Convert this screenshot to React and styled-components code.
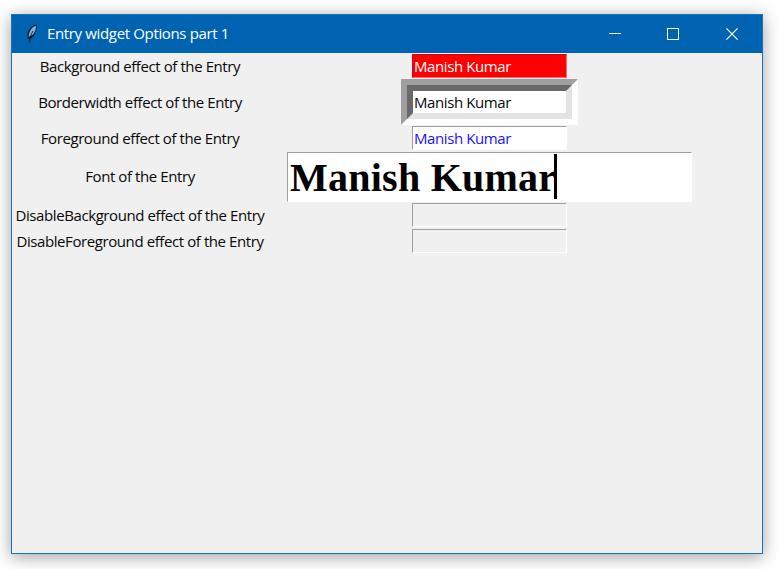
import React from "react";
import styled, { createGlobalStyle } from "styled-components";

const GlobalStyle = createGlobalStyle`
  * { box-sizing: border-box; }
  html, body { margin: 0; background: #fff; overflow: hidden; }
`;

const Desktop = styled.div`
  width: 779px;
  height: 569px;
  padding: 14px 16px 15px 11px;
  overflow: hidden;
  background: #fff;
`;

const Window = styled.main`
  width: 752px;
  height: 540px;
  border: 1px solid #1873b8;
  background: #f0f0f0;
  box-shadow: 0 3px 16px rgba(0, 0, 0, 0.38);
  font-family: "Open Sans", "Noto Sans", sans-serif;
`;

const TitleBar = styled.header`
  display: flex;
  align-items: center;
  height: 38px;
  padding-left: 12px;
  background: #0063b1;
  color: #fff;
`;

const Title = styled.h1`
  flex: 1;
  margin: 0 0 0 7px;
  font-size: 15px;
  font-weight: 400;
  line-height: 36px;
  height: 38px;
  letter-spacing: -0.35px;
  white-space: nowrap;
`;

const Control = styled.button`
  display: flex;
  align-items: center;
  justify-content: center;
  width: ${(p) => p.$width || 58}px;
  height: 38px;
  padding: 0;
  border: 0;
  background: transparent;
  color: #fff;
`;

const Form = styled.div`
  display: grid;
  grid-template-columns: 256px 443px;
  grid-template-rows: 26px 46px 26px 51px 26px 26px;
  justify-items: center;
  align-items: center;
`;

const Label = styled.label`
  padding-bottom: ${(p) => p.$lift || 0}px;
  color: #080808;
  font-size: 15px;
  line-height: 20px;
  letter-spacing: -0.41px;
  white-space: nowrap;
`;

const Entry = styled.div`
  display: flex;
  align-items: center;
  width: 155px;
  height: 24px;
  padding-left: 1px;
  border: 1px solid;
  border-color: #a0a0a0 #fff #fff #a0a0a0;
  background: ${(p) => p.$bg || "#fff"};
  color: ${(p) => p.$fg || "#080808"};
  font-size: 15px;
  letter-spacing: -0.4px;
  line-height: 20px;
  white-space: nowrap;
`;

const RedEntry = styled(Entry)`
  padding-bottom: 1px;
  border-color: #c80c0c #ff6a6a #ff6a6a #c80c0c;
`;

const Bevel = styled.div`
  width: 177px;
  height: 46px;
  border: 6px solid;
  border-color: #a0a0a0 #fff #fff #a0a0a0;
`;

const InnerBevel = styled.div`
  height: 34px;
  border: 6px solid;
  border-color: #696969 #e3e3e3 #e3e3e3 #696969;
`;

const FlatEntry = styled(Entry)`
  width: 153px;
  height: 22px;
  padding-bottom: 1px;
  border: 0;
`;

const LargeEntry = styled(Entry)`
  width: 405px;
  height: 50px;
  padding-left: 2px;
  color: #000;
  font: bold 40px/48px "Liberation Serif", serif;
  letter-spacing: 0.25px;
`;

const LargeText = styled.span`
  padding-top: 2px;
`;

const Caret = styled.span`
  width: 3px;
  height: 45px;
  margin-left: -2px;
  background: #000;
`;

const Feather = () => (
  <svg width="16" height="20" viewBox="0 0 16 20" fill="none">
    <path d="M11.6 0.5C7 2 4.5 5.5 3.5 10L3.8 15L6 15.5L9.8 12C12 8 13.4 4 12.6 1Z" fill="#0e1b2b" />
    <path d="M12 1.5C8 3 5.2 6.5 4.6 12.8L8.8 10.8C11 8 12.2 5 12 1.5Z" fill="#7eaee0" />
    <path d="M9 7L7.4 10L6.2 14L5.6 18.5" stroke="#07111b" strokeWidth=".8" />
  </svg>
);

export default function App() {
  return (
    <>
      <GlobalStyle />
      <Desktop>
        <Window>
          <TitleBar>
            <Feather />
            <Title>Entry widget Options part 1</Title>
            <Control aria-label="Minimize">
              <svg width="12" height="12" shapeRendering="crispEdges"><path d="M0 5.5H12" stroke="currentColor" /></svg>
            </Control>
            <Control aria-label="Maximize">
              <svg width="12" height="12" shapeRendering="crispEdges"><rect x=".5" y=".5" width="11" height="11" fill="none" stroke="currentColor" /></svg>
            </Control>
            <Control aria-label="Close" $width={60}>
              <svg width="12" height="12"><path d="M.4 .4L11.6 11.6M11.6 .4L.4 11.6" stroke="currentColor" strokeWidth="1.2" /></svg>
            </Control>
          </TitleBar>
          <Form>
            <Label>Background effect of the Entry</Label>
            <RedEntry $bg="#f00" $fg="#fff">Manish Kumar</RedEntry>
            <Label>Borderwidth effect of the Entry</Label>
            <Bevel><InnerBevel><FlatEntry>Manish Kumar</FlatEntry></InnerBevel></Bevel>
            <Label>Foreground effect of the Entry</Label>
            <Entry $fg="#2010ff">Manish Kumar</Entry>
            <Label $lift={2}>Font of the Entry</Label>
            <LargeEntry><LargeText>Manish Kumar</LargeText><Caret /></LargeEntry>
            <Label>DisableBackground effect of the Entry</Label>
            <Entry $bg="#f0f0f0" />
            <Label>DisableForeground effect of the Entry</Label>
            <Entry $bg="#f0f0f0" />
          </Form>
        </Window>
      </Desktop>
    </>
  );
}
